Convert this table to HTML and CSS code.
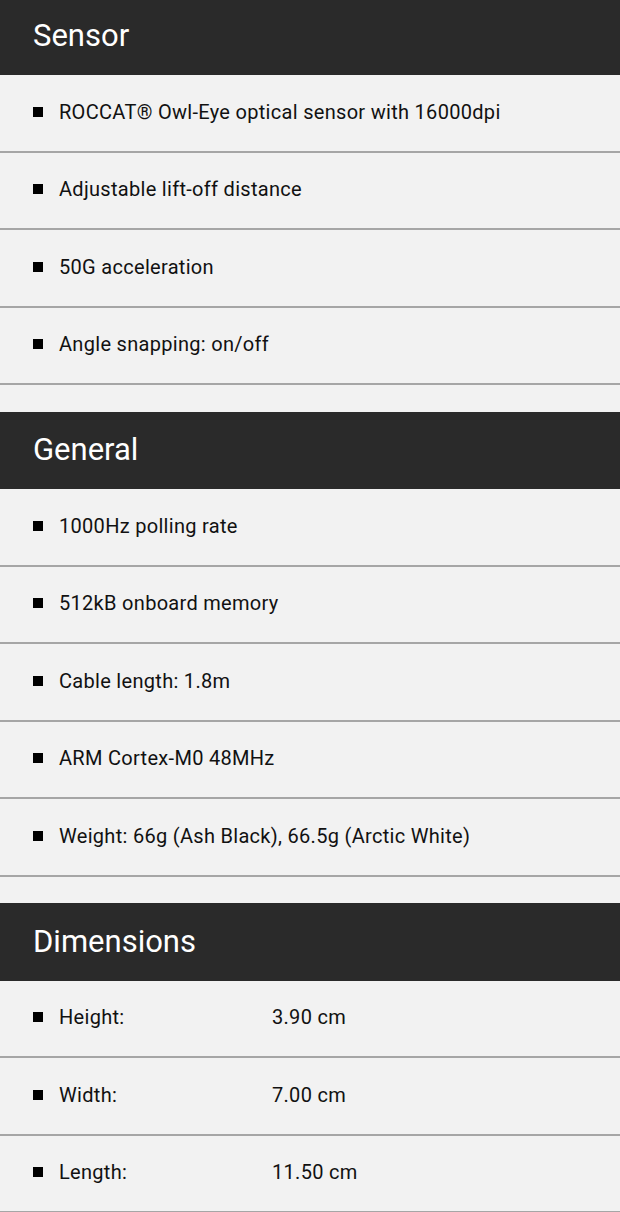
FILE: index.html
```html
<!DOCTYPE html>
<html>
<head>
<meta charset="utf-8">
<link rel="stylesheet" href="styles.css">
</head>
<body>
<div class="page">
  <section class="spec">
    <h2 class="spec-title">Sensor</h2>
    <ul class="spec-list">
      <li class="spec-item"><span class="bullet"></span><span>ROCCAT® Owl-Eye optical sensor with 16000dpi</span></li>
      <li class="spec-item"><span class="bullet"></span><span>Adjustable lift-off distance</span></li>
      <li class="spec-item"><span class="bullet"></span><span>50G acceleration</span></li>
      <li class="spec-item"><span class="bullet"></span><span>Angle snapping: on/off</span></li>
    </ul>
  </section>
  <section class="spec">
    <h2 class="spec-title">General</h2>
    <ul class="spec-list">
      <li class="spec-item"><span class="bullet"></span><span>1000Hz polling rate</span></li>
      <li class="spec-item"><span class="bullet"></span><span>512kB onboard memory</span></li>
      <li class="spec-item"><span class="bullet"></span><span>Cable length: 1.8m</span></li>
      <li class="spec-item"><span class="bullet"></span><span>ARM Cortex-M0 48MHz</span></li>
      <li class="spec-item"><span class="bullet"></span><span>Weight: 66g (Ash Black), 66.5g (Arctic White)</span></li>
    </ul>
  </section>
  <section class="spec">
    <h2 class="spec-title">Dimensions</h2>
    <ul class="spec-list">
      <li class="spec-item"><span class="bullet"></span><span class="label">Height:</span><span class="value">3.90 cm</span></li>
      <li class="spec-item"><span class="bullet"></span><span class="label">Width:</span><span class="value">7.00 cm</span></li>
      <li class="spec-item"><span class="bullet"></span><span class="label">Length:</span><span class="value">11.50 cm</span></li>
    </ul>
  </section>
</div>
</body>
</html>
```
FILE: styles.css
```css
html, body {
  margin: 0;
  padding: 0;
  background: #f2f2f2;
}
body {
  font-family: Roboto, "Liberation Sans", sans-serif;
  color: #111;
  overflow: hidden;
}
.page {
  margin-top: -2.5px;
  display: flex;
  flex-direction: column;
  gap: 26.5px;
}
.spec-title {
  margin: 0;
  height: 77.5px;
  box-sizing: border-box;
  background: #2a2a2a;
  color: #fff;
  font-size: 31px;
  font-weight: 400;
  padding-left: 33px;
  padding-bottom: 1px;
  display: flex;
  align-items: center;
}
.spec-list {
  list-style: none;
  margin: 0;
  padding: 0;
}
.spec-item {
  height: 77.5px;
  box-sizing: border-box;
  border-bottom: 2px solid #a6a6a6;
  display: flex;
  align-items: center;
  padding-left: 33px;
  font-size: 20px;
  letter-spacing: 0.3px;
  padding-bottom: 2px;
}
.bullet {
  width: 10px;
  height: 10px;
  background: #000;
  margin-right: 16px;
  flex: none;
}
.label {
  width: 213px;
  flex: none;
}
```
